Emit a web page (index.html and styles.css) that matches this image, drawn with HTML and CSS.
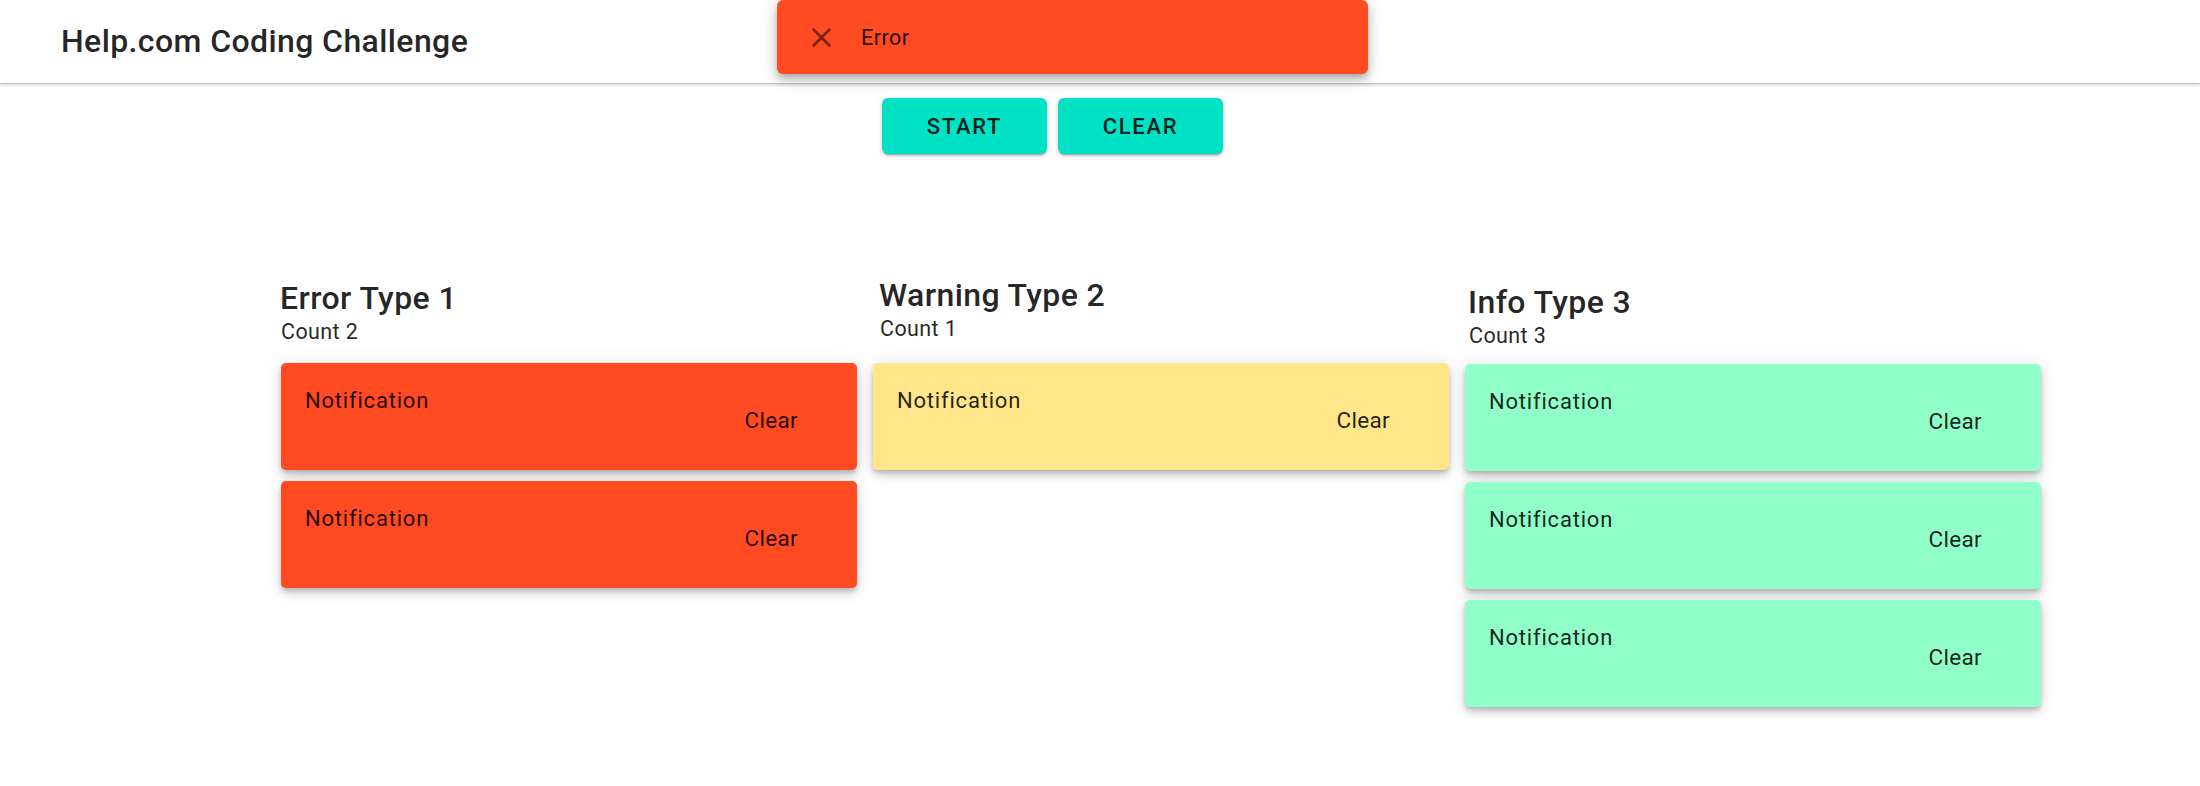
FILE: index.html
```html
<!DOCTYPE html>
<html lang="en">
<head>
    <meta charset="UTF-8">
    <meta name="viewport" content="width=device-width, initial-scale=1.0">
    <title>Help.com Coding Challenge</title>
    <link rel="stylesheet" href="styles.css">
</head>
<body>

    <header class="topbar">
        <h1 class="topbar-title">Help.com Coding Challenge</h1>
    </header>

    <div class="toast">
        <svg class="toast-close" viewBox="0 0 24 24" aria-hidden="true">
            <path d="M19 6.41L17.59 5 12 10.59 6.41 5 5 6.41 10.59 12 5 17.59 6.41 19 12 13.41 17.59 19 19 17.59 13.41 12z"/>
        </svg>
        <span class="toast-text">Error</span>
    </div>

    <div class="controls">
        <button type="button" class="btn">Start</button>
        <button type="button" class="btn">Clear</button>
    </div>

    <main class="columns">

        <section class="column column--error">
            <div class="column-head">
                <h2>Error Type 1</h2>
                <div class="count">Count 2</div>
            </div>
            <div class="card">
                <span class="card-text">Notification</span>
                <span class="card-clear">Clear</span>
            </div>
            <div class="card">
                <span class="card-text">Notification</span>
                <span class="card-clear">Clear</span>
            </div>
        </section>

        <section class="column column--warning">
            <div class="column-head">
                <h2>Warning Type 2</h2>
                <div class="count">Count 1</div>
            </div>
            <div class="card">
                <span class="card-text">Notification</span>
                <span class="card-clear">Clear</span>
            </div>
        </section>

        <section class="column column--info">
            <div class="column-head">
                <h2>Info Type 3</h2>
                <div class="count">Count 3</div>
            </div>
            <div class="card">
                <span class="card-text">Notification</span>
                <span class="card-clear">Clear</span>
            </div>
            <div class="card">
                <span class="card-text">Notification</span>
                <span class="card-clear">Clear</span>
            </div>
            <div class="card">
                <span class="card-text">Notification</span>
                <span class="card-clear">Clear</span>
            </div>
        </section>

    </main>

</body>
</html>
```

FILE: styles.css
```css
body {
    font-family: Roboto, "Liberation Sans", Arial, sans-serif;
    color: rgba(0, 0, 0, 0.87);
    background: #fff;
    margin: 0;
}

.topbar {
    height: 83px;
    display: flex;
    align-items: center;
    padding-left: 61px;
    border-bottom: 1px solid #c4c4c4;
    box-shadow: 0 1px 3px rgba(0, 0, 0, 0.18);
}

.topbar-title {
    margin: 0;
    font-size: 32px;
    font-weight: 500;
    line-height: 1.172;
    letter-spacing: 0.4px;
}

/* snackbar over the header */
.toast {
    position: absolute;
    top: 0;
    left: 777px;
    width: 591px;
    height: 74px;
    box-sizing: border-box;
    padding-left: 28px;
    display: flex;
    align-items: center;
    background-color: #ff4a22;
    border-radius: 6px;
    box-shadow: 0 4px 7px -2px rgba(0,0,0,.25), 0 7px 12px 1px rgba(0,0,0,.12), 0 2px 18px 2px rgba(0,0,0,.1);
    z-index: 10;
}

.toast-close {
    width: 33px;
    height: 33px;
    fill: rgba(0, 0, 0, 0.52);
    margin-right: 23px;
}

.toast-text {
    font-size: 21.5px;
    letter-spacing: 0.5px;
}

.controls {
    display: flex;
    gap: 11px;
    padding-left: 882px;
    margin-top: 14px;
}

.btn {
    width: 165px;
    height: 56px;
    border: none;
    border-radius: 6px;
    background-color: #00e2c5;
    color: rgba(0, 0, 0, 0.87);
    font-family: inherit;
    font-size: 22px;
    font-weight: 500;
    letter-spacing: 1.7px;
    text-transform: uppercase;
    cursor: pointer;
    box-shadow: 0 3px 1px -2px rgba(0,0,0,.2), 0 2px 3px 0 rgba(0,0,0,.14), 0 1px 6px 0 rgba(0,0,0,.12);
}

.columns {
    display: flex;
    align-items: flex-start;
    gap: 16px;
    padding-left: 281px;
    margin-top: 125px;
}

.column {
    width: 576px;
}

.column-head {
    margin-bottom: 16px;
}

.column-head h2 {
    margin: 0;
    font-size: 32px;
    font-weight: 500;
    line-height: 38px;
    letter-spacing: 0.4px;
    margin-left: -1px;
}

.count {
    font-size: 21.5px;
    line-height: 30px;
    letter-spacing: 0.4px;
}

.column--warning .column-head {
    margin-top: -3px;
    margin-bottom: 19px;
    padding-left: 7px;
}

.column--info .column-head {
    margin-top: 4px;
    margin-bottom: 13px;
    padding-left: 4px;
}

.card {
    height: 107px;
    box-sizing: border-box;
    display: flex;
    justify-content: space-between;
    align-items: flex-start;
    padding: 22px 59px 0 24px;
    margin-bottom: 11px;
    border-radius: 5px;
    box-shadow: 0 3px 5px -1px rgba(0,0,0,.2), 0 6px 10px 0 rgba(0,0,0,.12), 0 1px 18px 0 rgba(0,0,0,.1);
}

.column--error .card {
    background-color: #ff4a22;
}

.column--warning .card {
    background-color: #ffe68a;
}

.column--info .card {
    background-color: #91ffc8;
}

.card-text {
    font-size: 22px;
    line-height: 32px;
    letter-spacing: 0.8px;
}

.card-clear {
    font-size: 22.5px;
    line-height: 32px;
    letter-spacing: 0.3px;
    margin-top: 19px;
}
```
